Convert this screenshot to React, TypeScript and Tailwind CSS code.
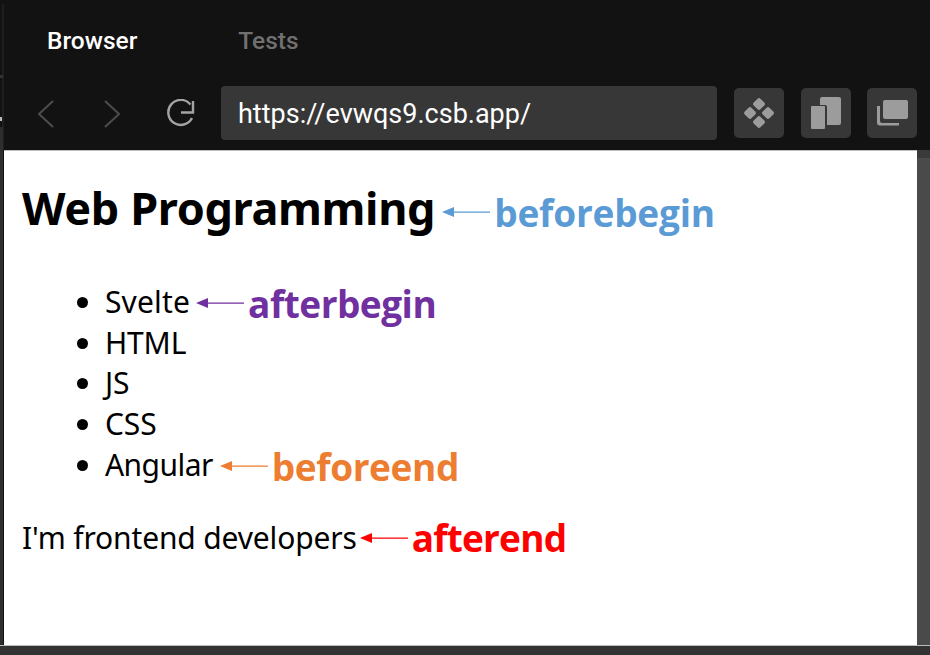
import React from 'react';

const sans = "font-['Noto_Sans',sans-serif]";

// little annotation arrow + label next to a line of text
const Note: React.FC<{ label: string; color: string; gap: string; text: string }> = ({ label, color, gap, text }) => (
  <span className="flex items-center">
    <svg width="48" height="12" viewBox="0 0 48 12" className={gap}>
      <path d="M0 6 L12 1 V5.4 H48 V6.7 H12 V11 Z" fill={color} />
    </svg>
    <span className={`${text} text-[37px] font-bold leading-none font-['Open_Sans',sans-serif]`}>{label}</span>
  </span>
);

const items = ['HTML', 'JS', 'CSS'];

export default function App() {
  return (
    <div className={`relative w-[930px] h-[655px] overflow-hidden bg-[#121212] flex flex-col ${sans}`}>
      {/* sliver of the window behind, left edge */}
      <div className="absolute left-[2px] top-[4px] w-[2px] h-[146px] bg-[#1e1e1e]" />
      <div className="absolute left-0 top-[75px] w-[3px] h-[3px] bg-[#333333]" />
      <div className="absolute left-0 top-[117px] w-[2px] h-[4px] bg-[#bbbbbb]" />
      <div className="absolute left-0 top-[127px] w-[3px] h-[23px] bg-[#2e2e2e]" />

      {/* tabs */}
      <div className="h-[86px] shrink-0 pl-[47px] pt-[26px] flex items-start gap-[101px] text-[24.5px] leading-[30px] font-medium font-['Roboto',sans-serif]">
        <span className="text-white">Browser</span>
        <span className="text-[#707070]">Tests</span>
      </div>

      {/* toolbar */}
      <div className="h-[64px] shrink-0 flex items-start pl-[37px]">
        <svg width="18" height="30" viewBox="0 0 18 30" className="mt-[13px]" fill="none" stroke="#4d4d4d" strokeWidth="2">
          <path d="M16 2 L2 15 L16 28" />
        </svg>
        <svg width="18" height="30" viewBox="0 0 18 30" className="mt-[13px] ml-[48px]" fill="none" stroke="#4d4d4d" strokeWidth="2">
          <path d="M2 2 L16 15 L2 28" />
        </svg>
        <svg width="32" height="30" viewBox="0 0 32 30" className="mt-[13px] ml-[44px]" fill="none" stroke="#a3a3a3" strokeWidth="2.4">
          <path d="M27 19 A12.5 12.5 0 1 1 25.5 5.5" />
          <path d="M28 2 V13.5 H16" />
        </svg>
        <div className="ml-[24px] w-[496px] h-[54px] pt-[2px] rounded-[4px] bg-[#373737] flex items-center pl-[17px] text-[27px] text-white font-['Roboto',sans-serif]">
          https://evwqs9.csb.app/
        </div>
        <div className="ml-[17px] w-[50px] h-[50px] mt-[2px] rounded-[5px] bg-[#373737] flex items-center justify-center">
          <svg width="34" height="34" viewBox="0 0 34 34" fill="#9c9c9c">
            <rect x="12.25" y="3.25" width="9.5" height="9.5" rx="2" transform="rotate(45 17 8)" />
            <rect x="3.25" y="12.25" width="9.5" height="9.5" rx="2" transform="rotate(45 8 17)" />
            <rect x="21.25" y="12.25" width="9.5" height="9.5" rx="2" transform="rotate(45 26 17)" />
            <rect x="12.25" y="21.25" width="9.5" height="9.5" rx="2" transform="rotate(45 17 26)" />
          </svg>
        </div>
        <div className="ml-[17px] w-[50px] h-[50px] mt-[2px] rounded-[5px] bg-[#373737] flex items-center justify-center">
          <svg width="30" height="32" viewBox="0 0 30 32" fill="#9c9c9c">
            <path d="M9 2 a2 2 0 0 1 2-2 H28 a2 2 0 0 1 2 2 V26 a2 2 0 0 1-2 2 H16 V10 a2 2 0 0 0-2-2 H9 Z" />
            <rect x="0" y="9" width="14" height="23" rx="1" />
          </svg>
        </div>
        <div className="ml-[16px] w-[50px] h-[50px] mt-[2px] rounded-[5px] bg-[#373737] flex items-center justify-center">
          <svg width="32" height="26" viewBox="0 0 32 26" fill="#9c9c9c">
            <rect x="7" y="0" width="25" height="19" rx="2" />
            <path d="M4 6 V21 a2 2 0 0 0 2 2 H23 V25.5 H4 a3 3 0 0 1-3-3 V6 Z" />
          </svg>
        </div>
      </div>

      {/* preview */}
      <div className="flex-1 flex bg-[#4a4a4a]">
        <div className="w-[4px] bg-[#2e2e2e] border-r border-[#111111]" />
        <div className="w-[913px] h-[495px] bg-white border-t border-[#bdbdbd] text-black pl-[18px]">
          <div className="flex items-center mt-[29px] h-[54px]">
            <h1 className="text-[45px] font-bold leading-none tracking-[-0.35px]">Web Programming</h1>
            <Note label="beforebegin" color="#5b9bd5" gap="ml-[7px] mr-[4px] mt-[10px]" text="text-[#5b9bd5] mt-[10px] tracking-[-0.2px]" />
          </div>
          <ul className="list-disc mt-[48px] pl-[83px] text-[30px] leading-[40.7px] tracking-[-0.15px] marker:text-black">
            <li>
              <span className="flex items-center">
                <span className="tracking-[0.15px]">Svelte</span>
                <Note label="afterbegin" color="#7030a0" gap="ml-[6px] mr-[4px] mt-[2px]" text="text-[#7030a0] mt-[2px] tracking-[-0.5px]" />
              </span>
            </li>
            {items.map((item) => (
              <li key={item}>{item}</li>
            ))}
            <li>
              <span className="flex items-center">
                <span className="tracking-[-0.55px]">Angular</span>
                <Note label="beforeend" color="#ed7d31" gap="ml-[7px] mr-[4px] mt-[2px]" text="text-[#ed7d31] mt-[2px] tracking-[-0.4px]" />
              </span>
            </li>
          </ul>
          <div className="flex items-center mt-[32px] text-[30px] leading-[40px] tracking-[-0.15px]">
            I'm frontend developers
            <Note label="afterend" color="#ff0000" gap="ml-[3px] mr-[4px] mt-[1px]" text="text-[#ff0000] tracking-[-0.8px]" />
          </div>
        </div>
        <div className="flex-1">
          <div className="h-[8px] bg-[#3a3a3a]" />
        </div>
      </div>
      <div className="h-[10px] shrink-0 bg-[#333333] border-t border-[#bdbdbd]" />
    </div>
  );
}
